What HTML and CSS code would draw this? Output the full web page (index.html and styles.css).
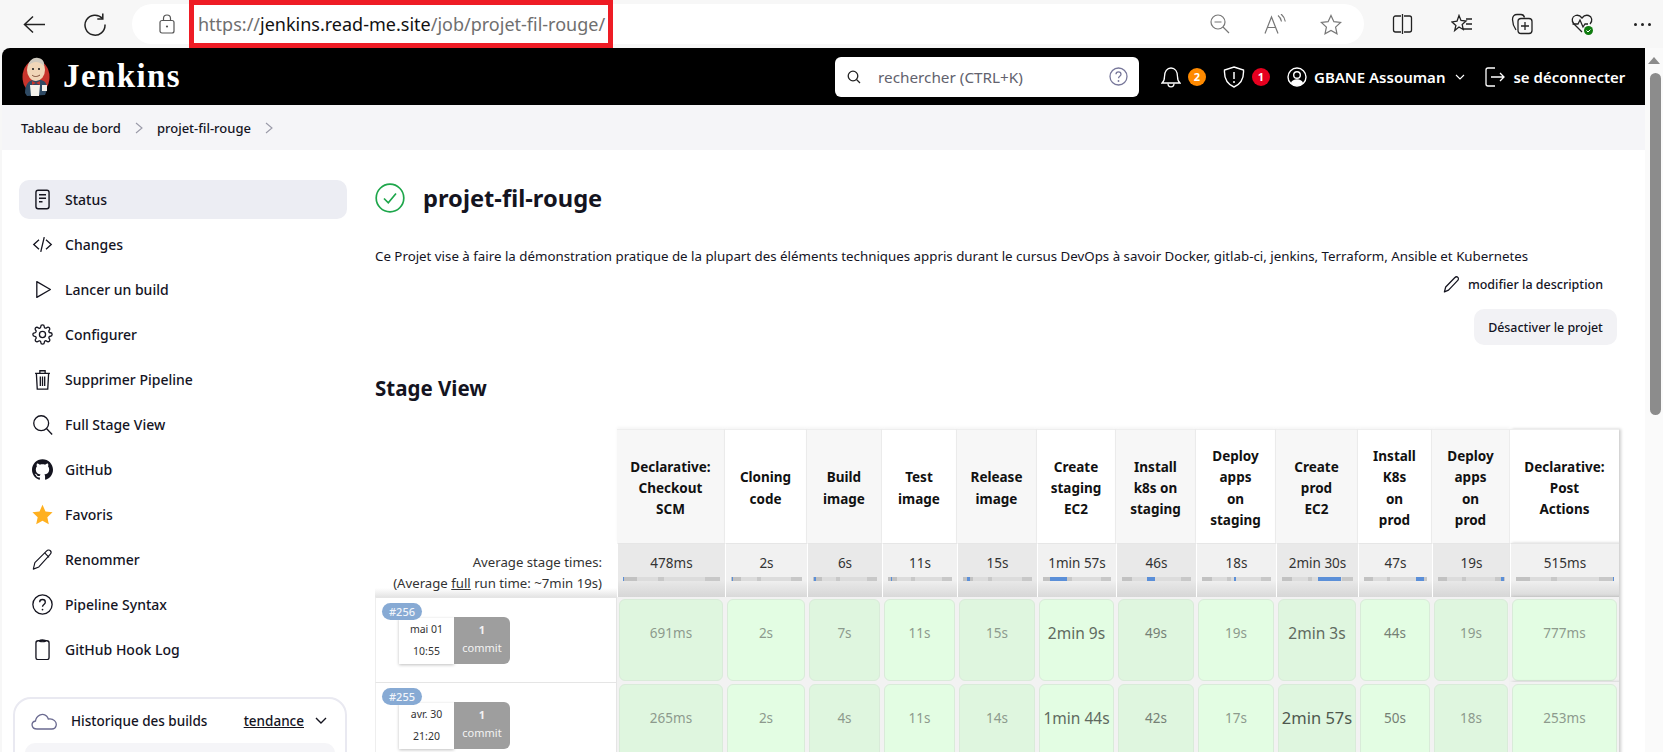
FILE: index.html
```html
<!DOCTYPE html>
<html lang="fr">

<head>
    <meta charset="UTF-8">
    <meta name="viewport" content="width=device-width, initial-scale=1.0">
    <title>projet-fil-rouge [Jenkins]</title>
    <link rel="stylesheet" href="styles.css">
</head>

<body>
    <!-- Barre du navigateur -->
    <div class="browser-bar">
        <svg class="b-back" width="23" height="19" viewBox="0 0 23 19"><path d="M22 9.5H2M10 1.5l-8.500 8 8.500 8" fill="none" stroke="#222" stroke-width="1.500"/></svg>
        <svg class="b-reload" width="24" height="24" viewBox="0 0 24 24"><path d="M19.500 6.500A10 10 0 1 0 22 12.500" fill="none" stroke="#222" stroke-width="1.500"/><path d="M19.800 1.500v5.500h-5.500" fill="none" stroke="#222" stroke-width="1.500"/></svg>
        <div class="address">
            <svg class="b-lock" width="16" height="20" viewBox="0 0 16 20"><rect x="1" y="6.500" width="14" height="12.500" rx="2" fill="none" stroke="#555" stroke-width="1.200"/><path d="M4.500 6.500V4.500a3.500 3.500 0 0 1 7 0v2" fill="none" stroke="#555" stroke-width="1.200"/><circle cx="8" cy="12.500" r="1.100" fill="#555"/></svg>
            <span class="url">https://<b>jenkins.read-me.site</b>/job/projet-fil-rouge/</span>
            <div class="address-tools">
                <svg width="20" height="20" viewBox="0 0 20 20"><circle cx="8" cy="8" r="7" fill="none" stroke="#777" stroke-width="1.200"/><path d="M4.500 8h7M13 13l6 6" fill="none" stroke="#777" stroke-width="1.200"/></svg>
                <svg width="22" height="20" viewBox="0 0 22 20"><path d="M1 19.500L7.500 3l6.500 16.500M3.500 13.500h8" fill="none" stroke="#777" stroke-width="1.200"/><path d="M14 1.500c2 1.500 3 3.500 3.500 6M17 0c2.500 2 3.800 4.500 4.300 7.500" fill="none" stroke="#777" stroke-width="1.200"/></svg>
                <svg width="22" height="21" viewBox="0 0 22 21"><path d="M11 1.500l2.900 6.200 6.700.8-5 4.600 1.400 6.700L11 16.500l-6 3.300 1.400-6.700-5-4.600 6.700-.8z" fill="none" stroke="#777" stroke-width="1.200"/></svg>
            </div>
        </div>
        <div class="browser-tools">
            <svg width="21" height="20" viewBox="0 0 21 20"><path d="M9 2H3.500A2 2 0 0 0 1.500 4v12a2 2 0 0 0 2 2H9M12 2h5.500a2 2 0 0 1 2 2v12a2 2 0 0 1-2 2H12M10.500 0v20" fill="none" stroke="#222" stroke-width="1.300"/></svg>
            <svg width="22" height="21" viewBox="0 0 22 21"><path d="M8 1.500l2 5 5 .5-3.800 3.400 1 5.100L8 13l-4.300 3.500 1.200-5.100L1 7.900l5-.8z" fill="none" stroke="#222" stroke-width="1.300"/><path d="M15 5h6M15 10h6M12 15h9" fill="none" stroke="#222" stroke-width="1.300"/></svg>
            <svg width="22" height="22" viewBox="0 0 22 22"><path d="M5 17C3 14 1.500 10 1.500 6.500 1.500 3 3.500 1.500 6 1.500h4c2 0 3 1 3.500 3" fill="none" stroke="#222" stroke-width="1.300"/><rect x="7" y="5.500" width="14" height="15" rx="3" fill="none" stroke="#222" stroke-width="1.300"/><path d="M14 9v8M10 13h8" fill="none" stroke="#222" stroke-width="1.300"/></svg>
            <svg width="23" height="23" viewBox="0 0 23 23"><path d="M11 19L3 11C0 8 1 3.500 4.500 2.500c2.500-.7 5 .5 6.500 2.500 1.500-2 4-3.200 6.500-2.500C21 3.500 22 8 19 11" fill="none" stroke="#222" stroke-width="1.300"/><path d="M1.500 11H7l2-4 3 7 2-3h3" fill="none" stroke="#222" stroke-width="1.300"/><circle cx="17.500" cy="17.500" r="4.500" fill="#107c10"/><path d="M15.500 17.500l1.500 1.500 2.500-2.500" fill="none" stroke="#fff" stroke-width="1"/></svg>
            <span class="more"><i></i><i></i><i></i></span>
        </div>
        <div class="red-box"></div>
    </div>

    <div class="frame">
        <div class="page">
            <!-- En-tete Jenkins -->
            <header class="top">
                <svg class="logo" width="28" height="40" viewBox="0 0 28 40">
                    <ellipse cx="14" cy="20" rx="13.500" ry="17" fill="#c8342c"/>
                    <path d="M3 36c0-8 3-12 8-13l8 0c4 1 6 3 6 10l-2 5-18 1z" fill="#2f4a63"/>
                    <path d="M8 28h10l-1 11H9z" fill="#f4f1ea"/>
                    <ellipse cx="14" cy="13" rx="9" ry="11" fill="#f0d6b8"/>
                    <path d="M6 9c1-6 6-9 10-8 4 0 7 4 6 8-3-3-5-4-8-4s-5 1-8 4z" fill="#cfc9be"/>
                    <circle cx="11" cy="12" r="1.100" fill="#222"/>
                    <circle cx="17" cy="12" r="1.100" fill="#222"/>
                    <path d="M10 18c2 2 5 2 8 0" fill="none" stroke="#7a4a35" stroke-width="1"/>
                    <path d="M10 24l4 2 4-2v4l-4-2-4 2z" fill="#c8342c"/>
                    <rect x="20" y="28" width="5" height="6" fill="#f4f1ea"/>
                </svg>
                <span class="brand">Jenkins</span>
                <div class="search">
                    <svg class="search-glass" width="14" height="14" viewBox="0 0 14 14"><circle cx="6" cy="6" r="4.800" fill="none" stroke="#222" stroke-width="1.300"/><path d="M9.500 9.500L13 13" stroke="#222" stroke-width="1.300"/></svg>
                    <span class="search-text">rechercher (CTRL+K)</span>
                    <svg class="search-help" width="19" height="19" viewBox="0 0 19 19"><circle cx="9.500" cy="9.500" r="8.500" fill="none" stroke="#77779a" stroke-width="1.300"/><path d="M7 7.300c0-3.200 5-3.200 5 0 0 2-2.500 2-2.500 4" fill="none" stroke="#77779a" stroke-width="1.300"/><circle cx="9.500" cy="14" r=".9" fill="#77779a"/></svg>
                </div>
                <svg class="top-bell" width="20" height="22" viewBox="0 0 20 22"><path d="M1 17c2-1.500 2.500-3 2.500-6.500C3.500 5.500 6 2 10 2s6.500 3.500 6.500 8.500c0 3.500.5 5 2.500 6.500z" fill="none" stroke="#fff" stroke-width="1.300"/><path d="M7 17.500c0 4.500 6 4.500 6 0" fill="none" stroke="#fff" stroke-width="1.300"/></svg>
                <span class="count count-warn">2</span>
                <svg class="top-shield" width="22" height="22" viewBox="0 0 22 22"><path d="M11 1l9.500 3c.5 8-2.500 14-9.500 17C4 18 1 12 1.500 4z" fill="none" stroke="#fff" stroke-width="1.400"/><path d="M11 6v7" stroke="#fff" stroke-width="1.500"/><circle cx="11" cy="16" r="1" fill="#fff"/></svg>
                <span class="count count-danger">1</span>
                <svg class="top-user" width="20" height="20" viewBox="0 0 20 20"><circle cx="10" cy="10" r="9" fill="none" stroke="#fff" stroke-width="1.400"/><circle cx="10" cy="8" r="3.300" fill="none" stroke="#fff" stroke-width="1.400"/><path d="M3.800 16.200c1-3 3.500-4 6.200-4s5.200 1 6.200 4c-3 3.500-9.400 3.500-12.400 0z" fill="#fff"/></svg>
                <span class="top-name">GBANE Assouman</span>
                <svg class="top-chevron" width="10" height="6" viewBox="0 0 10 6"><path d="M1 1l4 4 4-4" fill="none" stroke="#fff" stroke-width="1.100"/></svg>
                <svg class="top-logout" width="20" height="20" viewBox="0 0 20 20"><path d="M10 1H3a2 2 0 0 0-2 2v14a2 2 0 0 0 2 2h7" fill="none" stroke="#fff" stroke-width="1.300"/><path d="M6 10h13M15 6l4 4-4 4" fill="none" stroke="#fff" stroke-width="1.300"/></svg>
                <span class="top-logout-text">se déconnecter</span>
            </header>

            <nav class="crumbs">
                <span>Tableau de bord</span>
                <svg width="8" height="12" viewBox="0 0 8 12"><path d="M1 1l6 5-6 5" fill="none" stroke="#9a9aa8" stroke-width="1.100"/></svg>
                <span>projet-fil-rouge</span>
                <svg width="8" height="12" viewBox="0 0 8 12"><path d="M1 1l6 5-6 5" fill="none" stroke="#9a9aa8" stroke-width="1.100"/></svg>
            </nav>

            <div class="content">
                <!-- Menu de gauche -->
                <aside class="side">
                    <a class="side-item active">
                        <svg width="24" height="24" viewBox="0 0 24 24"><rect x="4.500" y="1.500" width="15" height="21" rx="2.500" fill="none" stroke="#14141f" stroke-width="1.600"/><path d="M8 6.500h8M8 10.500h8M8 14.500h4" fill="none" stroke="#14141f" stroke-width="1.600"/></svg>
                        Status
                    </a>
                    <a class="side-item">
                        <svg width="24" height="24" viewBox="0 0 24 24"><path d="M8 6.500L2 12l6 5.500M16 6.500l6 5.500-6 5.500M14 3.500L10 20.500" fill="none" stroke="#14141f" stroke-width="1.500"/></svg>
                        Changes
                    </a>
                    <a class="side-item">
                        <svg width="24" height="24" viewBox="0 0 24 24"><path d="M5.500 3v18L21 12z" fill="none" stroke="#14141f" stroke-width="1.500" stroke-linejoin="round"/></svg>
                        Lancer un build
                    </a>
                    <a class="side-item">
                        <svg width="24" height="24" viewBox="0 0 24 24"><circle cx="12" cy="12" r="3.500" fill="none" stroke="#14141f" stroke-width="1.500"/><path d="M19.400 15a1.650 1.650 0 0 0 .33 1.820l.06.06a2 2 0 0 1 0 2.830 2 2 0 0 1-2.830 0l-.06-.06a1.650 1.650 0 0 0-1.820-.33 1.650 1.650 0 0 0-1 1.510V21a2 2 0 0 1-2 2 2 2 0 0 1-2-2v-.09A1.650 1.650 0 0 0 9 19.400a1.650 1.650 0 0 0-1.820.33l-.06.06a2 2 0 0 1-2.830 0 2 2 0 0 1 0-2.830l.06-.06a1.650 1.650 0 0 0 .33-1.820 1.650 1.650 0 0 0-1.510-1H3a2 2 0 0 1-2-2 2 2 0 0 1 2-2h.09A1.650 1.650 0 0 0 4.600 9a1.650 1.650 0 0 0-.33-1.820l-.06-.06a2 2 0 0 1 0-2.830 2 2 0 0 1 2.830 0l.06.06a1.650 1.650 0 0 0 1.820.33H9a1.650 1.650 0 0 0 1-1.510V3a2 2 0 0 1 2-2 2 2 0 0 1 2 2v.09a1.650 1.650 0 0 0 1 1.510 1.650 1.650 0 0 0 1.820-.33l.06-.06a2 2 0 0 1 2.830 0 2 2 0 0 1 0 2.830l-.06.06a1.650 1.650 0 0 0-.33 1.820V9a1.650 1.650 0 0 0 1.510 1H21a2 2 0 0 1 2 2 2 2 0 0 1-2 2h-.09a1.650 1.650 0 0 0-1.510 1z" fill="none" stroke="#14141f" stroke-width="1.500"/></svg>
                        Configurer
                    </a>
                    <a class="side-item">
                        <svg width="24" height="24" viewBox="0 0 24 24"><path d="M3.500 5h17M9 5V2h6v3M5 5l1 18h12l1-18M9.500 8.500v11M12 8.500v11M14.500 8.500v11" fill="none" stroke="#14141f" stroke-width="1.500"/></svg>
                        Supprimer Pipeline
                    </a>
                    <a class="side-item">
                        <svg width="24" height="24" viewBox="0 0 24 24"><circle cx="10.500" cy="10.500" r="8.500" fill="none" stroke="#14141f" stroke-width="1.500"/><path d="M16.800 16.800L23 23.500" fill="none" stroke="#14141f" stroke-width="1.500"/></svg>
                        Full Stage View
                    </a>
                    <a class="side-item">
                        <svg width="24" height="24" viewBox="0 0 24 24"><path fill="#14141f" d="M12 .297c-6.630 0-12 5.373-12 12 0 5.303 3.438 9.800 8.205 11.385.6.113.82-.258.82-.577 0-.285-.01-1.040-.015-2.040-3.338.724-4.042-1.610-4.042-1.610C4.422 18.070 3.633 17.700 3.633 17.700c-1.087-.744.084-.729.084-.729 1.205.084 1.838 1.236 1.838 1.236 1.070 1.835 2.809 1.305 3.495.998.108-.776.417-1.305.76-1.605-2.665-.3-5.466-1.332-5.466-5.930 0-1.310.465-2.380 1.235-3.220-.135-.303-.54-1.523.105-3.176 0 0 1.005-.322 3.300 1.230.96-.267 1.980-.399 3-.405 1.020.006 2.040.138 3 .405 2.280-1.552 3.285-1.230 3.285-1.230.645 1.653.24 2.873.12 3.176.765.84 1.230 1.910 1.230 3.220 0 4.610-2.805 5.625-5.475 5.920.42.36.81 1.096.81 2.220 0 1.606-.015 2.896-.015 3.286 0 .315.21.69.825.57C20.565 22.092 24 17.592 24 12.297c0-6.627-5.373-12-12-12"/></svg>
                        GitHub
                    </a>
                    <a class="side-item">
                        <svg width="24" height="24" viewBox="0 0 24 24"><path d="M12 .8l3.400 7.700 8.100.9-6 5.600 1.700 8.200L12 19.100l-7.200 4.100 1.700-8.200-6-5.600 8.100-.9z" fill="#ffb01f"/></svg>
                        Favoris
                    </a>
                    <a class="side-item">
                        <svg width="24" height="24" viewBox="0 0 24 24"><path d="M1.500 23l1.800-7.500L16.500 2.500c1.500-1.500 3.500-1.500 4.500-.5s1 3-.5 4.500L7.800 20.500z" fill="none" stroke="#14141f" stroke-width="1.300" stroke-linejoin="round"/><path d="M14.500 4.500l5 5" fill="none" stroke="#14141f" stroke-width="1.300"/></svg>
                        Renommer
                    </a>
                    <a class="side-item">
                        <svg width="24" height="24" viewBox="0 0 24 24"><circle cx="12" cy="12" r="11" fill="none" stroke="#14141f" stroke-width="1.500"/><path d="M8.800 9.300c0-4 6.400-4 6.400 0 0 2.700-3.200 2.500-3.200 5.200" fill="none" stroke="#14141f" stroke-width="1.500"/><circle cx="12" cy="17.800" r="1" fill="#14141f"/></svg>
                        Pipeline Syntax
                    </a>
                    <a class="side-item">
                        <svg width="24" height="24" viewBox="0 0 24 24"><rect x="4.500" y="2" width="15" height="21.500" rx="2.500" fill="none" stroke="#14141f" stroke-width="1.500"/><path d="M8.500 2c0-1.500 7-1.500 7 0 0 1.500-7 1.500-7 0z" fill="none" stroke="#14141f" stroke-width="1.300"/></svg>
                        GitHub Hook Log
                    </a>

                    <section class="history">
                        <div class="history-head">
                            <svg width="26" height="18" viewBox="0 0 26 18"><path d="M6 17c-6 0-6.500-7-1.500-8 .5-5 7-9 11-5 1 1 1.500 2 1.800 3 5-1 9 3 7.700 7-.5 2-2 3-4 3z" fill="none" stroke="#6a6a90" stroke-width="1.300"/></svg>
                            <span class="history-title">Historique des builds</span>
                            <span class="history-link">tendance</span>
                            <svg width="12" height="8" viewBox="0 0 12 8"><path d="M1 1l5 5 5-5" fill="none" stroke="#14141f" stroke-width="1.400"/></svg>
                        </div>
                        <div class="history-row"></div>
                    </section>
                </aside>

                <main class="main">
                    <div class="job-title">
                        <svg width="30" height="30" viewBox="0 0 30 30"><circle cx="15" cy="15" r="13.800" fill="none" stroke="#1ea64b" stroke-width="1.700"/><path d="M9 15.500l4.300 4.300L21 10.500" fill="none" stroke="#1ea64b" stroke-width="1.700"/></svg>
                        <h1>projet-fil-rouge</h1>
                    </div>
                    <p class="desc">Ce Projet vise à faire la démonstration pratique de la plupart des éléments techniques appris durant le cursus DevOps à savoir Docker, gitlab-ci, jenkins, Terraform, Ansible et Kubernetes</p>
                    <div class="edit-desc">
                        <svg width="17" height="17" viewBox="0 0 24 24"><path d="M2 22.500l1.800-7L16.500 2.500c1.500-1.500 3.500-1.500 4.500-.5s1 3-.5 4.500L7.800 20z" fill="none" stroke="#14141f" stroke-width="1.800" stroke-linejoin="round"/></svg>
                        <span>modifier la description</span>
                    </div>
                    <div class="actions"><button class="disable-btn">Désactiver le projet</button></div>

                    <h2>Stage View</h2>

                    <!-- Tableau des stages -->
                    <div class="stages">
                        <div class="blank"></div>
                        <div class="stage-name odd">Declarative:<br>Checkout<br>SCM</div>
                        <div class="stage-name">Cloning<br>code</div>
                        <div class="stage-name odd">Build<br>image</div>
                        <div class="stage-name">Test<br>image</div>
                        <div class="stage-name odd">Release<br>image</div>
                        <div class="stage-name">Create<br>staging<br>EC2</div>
                        <div class="stage-name odd">Install<br>k8s on<br>staging</div>
                        <div class="stage-name">Deploy<br>apps<br>on<br>staging</div>
                        <div class="stage-name odd">Create<br>prod<br>EC2</div>
                        <div class="stage-name">Install<br>K8s<br>on<br>prod</div>
                        <div class="stage-name odd">Deploy<br>apps<br>on<br>prod</div>
                        <div class="stage-name">Declarative:<br>Post<br>Actions</div>

                        <div class="avg-label">Average stage times:<br>(Average <u>full</u> run time: ~7min 19s)</div>
                        <div class="avg odd">478ms<div class="bar"><i style="left:0;width:1%"></i></div></div>
                        <div class="avg">2s<div class="bar"><i style="left:1%;width:2%"></i></div></div>
                        <div class="avg odd">6s<div class="bar"><i style="left:1%;width:3%"></i></div></div>
                        <div class="avg">11s<div class="bar"><i style="left:4%;width:3%"></i></div></div>
                        <div class="avg odd">15s<div class="bar"><i style="left:6%;width:4%"></i></div></div>
                        <div class="avg">1min 57s<div class="bar"><i style="left:11%;width:25%"></i></div></div>
                        <div class="avg odd">46s<div class="bar"><i style="left:36%;width:12%"></i></div></div>
                        <div class="avg">18s<div class="bar"><i style="left:46%;width:4%"></i></div></div>
                        <div class="avg odd">2min 30s<div class="bar"><i style="left:50%;width:33%"></i></div></div>
                        <div class="avg">47s<div class="bar"><i style="left:83%;width:12%"></i></div></div>
                        <div class="avg odd">19s<div class="bar"><i style="left:94%;width:4%"></i></div></div>
                        <div class="avg">515ms<div class="bar"><i style="left:99%;width:1%"></i></div></div>

                        <div class="build">
                            <span class="build-no">#256</span>
                            <div class="build-date">mai 01<br>10:55</div>
                            <div class="build-commit"><b>1</b><br>commit</div>
                        </div>
                        <div class="cell odd"><div class="ok">691ms</div></div>
                        <div class="cell"><div class="ok">2s</div></div>
                        <div class="cell odd"><div class="ok">7s</div></div>
                        <div class="cell"><div class="ok">11s</div></div>
                        <div class="cell odd"><div class="ok">15s</div></div>
                        <div class="cell"><div class="ok big">2min 9s</div></div>
                        <div class="cell odd"><div class="ok mid">49s</div></div>
                        <div class="cell"><div class="ok">19s</div></div>
                        <div class="cell odd"><div class="ok big">2min 3s</div></div>
                        <div class="cell"><div class="ok mid">44s</div></div>
                        <div class="cell odd"><div class="ok">19s</div></div>
                        <div class="cell"><div class="ok">777ms</div></div>

                        <div class="build">
                            <span class="build-no">#255</span>
                            <div class="build-date">avr. 30<br>21:20</div>
                            <div class="build-commit"><b>1</b><br>commit</div>
                        </div>
                        <div class="cell odd"><div class="ok">265ms</div></div>
                        <div class="cell"><div class="ok">2s</div></div>
                        <div class="cell odd"><div class="ok">4s</div></div>
                        <div class="cell"><div class="ok">11s</div></div>
                        <div class="cell odd"><div class="ok">14s</div></div>
                        <div class="cell"><div class="ok big">1min 44s</div></div>
                        <div class="cell odd"><div class="ok mid">42s</div></div>
                        <div class="cell"><div class="ok">17s</div></div>
                        <div class="cell odd"><div class="ok huge">2min 57s</div></div>
                        <div class="cell"><div class="ok mid">50s</div></div>
                        <div class="cell odd"><div class="ok">18s</div></div>
                        <div class="cell"><div class="ok">253ms</div></div>
                    </div>
                </main>
            </div>
        </div>

        <div class="scrollbar">
            <span class="scroll-up"></span>
            <span class="scroll-thumb"></span>
        </div>
    </div>
</body>

</html>
```

FILE: styles.css
```css
* {
    box-sizing: border-box;
}

html,
body {
    height: 100%;
}

body {
    margin: 0;
    height: 752px;
    overflow: hidden;
    background: #f7f7f7;
    color: #14141f;
    font-family: "Noto Sans", Arial, sans-serif;
    font-size: 14px;
}

/* Barre du navigateur */
.browser-bar {
    position: relative;
    display: flex;
    align-items: center;
    height: 48px;
    padding-left: 23px;
}

.b-back {
    margin-right: 37px;
}

.b-reload {
    margin-right: 25px;
}

.address {
    display: flex;
    align-items: center;
    width: 1232px;
    height: 40px;
    padding-left: 27px;
    background: #fff;
    border-radius: 20px;
}

.b-lock {
    margin-right: 23px;
}

.url {
    font-size: 18px;
    color: #6f6f6f;
    white-space: nowrap;
}

.url b {
    font-weight: 400;
    color: #111;
}

.address-tools {
    display: flex;
    align-items: center;
    gap: 34px;
    margin-left: auto;
    margin-right: 22px;
}

.browser-tools {
    display: flex;
    align-items: center;
    gap: 38px;
    margin-left: 28px;
}

.more {
    display: flex;
    gap: 4px;
    margin-left: 2px;
}

.more i {
    width: 3px;
    height: 3px;
    border-radius: 50%;
    background: #222;
}

/* Cadre rouge d'annotation */
.red-box {
    position: absolute;
    left: 189px;
    top: 0;
    width: 424px;
    height: 48px;
    border: 5px solid #ee1c25;
}

/* Page */
.frame {
    display: flex;
    height: 704px;
    padding-left: 2px;
}

.page {
    width: 1643px;
    height: 704px;
    overflow: hidden;
    background: #fff;
    border-top-left-radius: 8px;
}

.top {
    display: flex;
    align-items: center;
    height: 57px;
    padding-left: 20px;
    background: #000;
    color: #fff;
}

.brand {
    width: 118px;
    margin-left: 13px;
    font-family: "Liberation Serif", serif;
    font-size: 33px;
    font-weight: 700;
    letter-spacing: 1.400px;
}

.search {
    display: flex;
    align-items: center;
    width: 304px;
    height: 40px;
    margin-left: 654px;
    padding: 0 11px 0 12px;
    background: #fff;
    border-radius: 6px;
}

.search-text {
    margin-left: 17px;
    color: #62626e;
    font-size: 15.300px;
}

.search-help {
    margin-left: auto;
}

.top-bell {
    margin-left: 22px;
}

.count {
    display: flex;
    align-items: center;
    justify-content: center;
    width: 18px;
    height: 18px;
    margin-left: 7px;
    border-radius: 50%;
    font-size: 11px;
    font-weight: 700;
}

.count-warn {
    background: #ff8a00;
}

.count-danger {
    background: #e6001f;
}

.top-shield {
    margin-left: 17px;
}

.top-user {
    margin-left: 17px;
}

.top-name,
.top-logout-text {
    font-size: 15px;
    font-weight: 600;
}

.top-name {
    margin-left: 7px;
}

.top-chevron {
    margin-left: 10px;
}

.top-logout {
    margin-left: 20px;
}

.top-logout-text {
    margin-left: 8px;
}

.crumbs {
    display: flex;
    align-items: center;
    gap: 14px;
    height: 45px;
    padding-left: 19px;
    background: #f5f5f8;
    font-size: 13px;
    font-weight: 500;
}

.content {
    display: flex;
}

/* Menu de gauche */
.side {
    flex: none;
    width: 373px;
    padding-top: 30px;
}

.side-item {
    display: flex;
    align-items: center;
    width: 328px;
    height: 39px;
    margin: 0 0 6px 17px;
    padding-left: 13px;
    border-radius: 10px;
    font-weight: 500;
}

.side-item svg {
    width: 21px;
    height: 21px;
    margin-right: 12px;
}

.side-item.active {
    background: #ecedf3;
}

.history {
    width: 334px;
    height: 120px;
    margin: 28px 0 0 11px;
    padding: 7px 10px;
    border: 2px solid #e9e9f1;
    border-radius: 18px;
    font-size: 13.500px;
}

.history-head {
    display: flex;
    align-items: center;
    height: 30px;
    padding-left: 6px;
    font-weight: 500;
}

.history-title {
    margin-left: 14px;
}

.history-link {
    margin-left: auto;
    margin-right: 11px;
    text-decoration: underline;
}

.history-head svg:last-child {
    margin-right: 8px;
}

.history-row {
    height: 50px;
    margin-top: 7px;
    background: #f5f5f8;
    border-radius: 10px;
}

/* Partie principale */
.main {
    flex: none;
    width: 1270px;
    padding: 33px 26px 0 0;
}

.job-title {
    display: flex;
    align-items: center;
    gap: 18px;
    height: 30px;
}

h1 {
    margin: 0;
    font-size: 23.700px;
    font-weight: 700;
}

.desc {
    margin: 33px 0 0;
    line-height: 20px;
    font-size: 13.300px;
}

.edit-desc {
    display: flex;
    align-items: center;
    justify-content: flex-end;
    gap: 8px;
    height: 20px;
    margin: 8px 16px 0 0;
    font-size: 12.500px;
    font-weight: 500;
}

.actions {
    display: flex;
    justify-content: flex-end;
    margin: 15px 2px 0 0;
}

.disable-btn {
    height: 36px;
    width: 143px;
    padding: 0;
    background: #f2f2f5;
    border: none;
    border-radius: 10px;
    color: #14141f;
    font-family: inherit;
    font-size: 12.400px;
    font-weight: 500;
}

h2 {
    margin: 29px 0 0;
    line-height: 28px;
    font-size: 20.500px;
    font-weight: 700;
}

/* Tableau des stages */
.stages {
    display: grid;
    grid-template-columns: 242px 108px 82px 75px 75px 80px 79px 80px 80px 82px 74px 78px 109px;
    grid-template-rows: 114px 54px 85px 86px;
    margin-top: 27px;
    color: #333;
    font-size: 13.500px;
}

.stage-name {
    display: flex;
    align-items: center;
    justify-content: center;
    padding-top: 4px;
    background: #fff;
    border-top: 1px solid #eee;
    border-right: 1px solid #eee;
    box-shadow: 0 -2px 3px rgba(0, 0, 0, .04);
    color: #111;
    font-weight: 700;
    line-height: 21.300px;
    text-align: center;
}

.stage-name:nth-child(13) {
    border-right: none;
    box-shadow: 2px 0 3px rgba(0, 0, 0, .2);
}

.stage-name.odd {
    background: #f7f7f7;
}

.avg-label {
    padding: 9px 15px 0 0;
    background: linear-gradient(#fff 45px, #e4e4e4);
    font-size: 13.200px;
    line-height: 20.500px;
    text-align: right;
}

.avg {
    padding: 10px 5px 0;
    background: linear-gradient(#f1f1f1 36px, #d9d9d9);
    border-top: 1px solid #e6e6e6;
    border-left: 1px solid #fff;
    line-height: 19px;
    text-align: center;
}

.avg.odd {
    background: linear-gradient(#e9e9e9 36px, #d6d6d6);
}

.stages > :nth-child(26) {
    box-shadow: 2px 0 3px rgba(0, 0, 0, .2);
}

.bar {
    position: relative;
    height: 4px;
    margin-top: 4px;
    background: linear-gradient(90deg, #c2c2c2 0 14%, #dcdcdc 14% 36%, #c8c8c8 36% 42%, #dcdcdc 42% 85%, #c8c8c8 85%);
}

.bar i {
    position: absolute;
    top: 0;
    height: 4px;
    background: #5b8fd8;
}

.build {
    position: relative;
    display: flex;
    padding: 20px 0 0 23px;
    border-top: 1px solid #e5e5e5;
    border-left: 1px solid #eee;
    border-right: 1px solid #e5e5e5;
    background: #fff;
    text-align: center;
}

.build-no {
    position: absolute;
    left: 6px;
    top: 5px;
    width: 40px;
    height: 17px;
    z-index: 1;
    background: #87aad4;
    border-radius: 9px;
    color: #f0f4fa;
    font-size: 11px;
    font-weight: 500;
    line-height: 17px;
}

.build-date {
    width: 55px;
    height: 46px;
    background: #fff;
    box-shadow: 0 1px 3px rgba(0, 0, 0, .25);
    font-size: 10.500px;
    line-height: 22px;
}

.build-commit {
    width: 56px;
    height: 47px;
    padding-top: 4px;
    margin-top: -1px;
    background: #9e9e9e;
    border-radius: 0 6px 6px 0;
    color: #f3f3f3;
    font-size: 11px;
    line-height: 18px;
}

.cell {
    padding: 2px;
    background: #f2f2f2;
}

.stages > :nth-child(39),
.stages > :nth-child(52) {
    box-shadow: 2px 0 3px rgba(0, 0, 0, .2);
}

.ok {
    height: 82px;
    padding-top: 23px;
    background: #e3fde3;
    border: 1px solid #d9ebd9;
    border-radius: 6px;
    color: #8d9a8d;
    font-size: 13.500px;
    line-height: 20px;
    text-align: center;
    white-space: nowrap;
}

.odd .ok {
    background: #dff6df;
}

.ok.mid {
    color: #758075;
}

.ok.big {
    color: #5f6a5f;
    font-size: 15.500px;
}

.ok.huge {
    color: #4e584e;
    font-size: 16.500px;
}

/* Barre de defilement */
.scrollbar {
    position: relative;
    flex: none;
    width: 18px;
    background: #fafafa;
}

.scroll-up {
    position: absolute;
    left: 3px;
    top: 9px;
    border: 6px solid transparent;
    border-top: none;
    border-bottom: 7px solid #8c8c8c;
}

.scroll-thumb {
    position: absolute;
    left: 5px;
    top: 25px;
    width: 11px;
    height: 342px;
    background: #8c8c8c;
    border-radius: 6px;
}
```
